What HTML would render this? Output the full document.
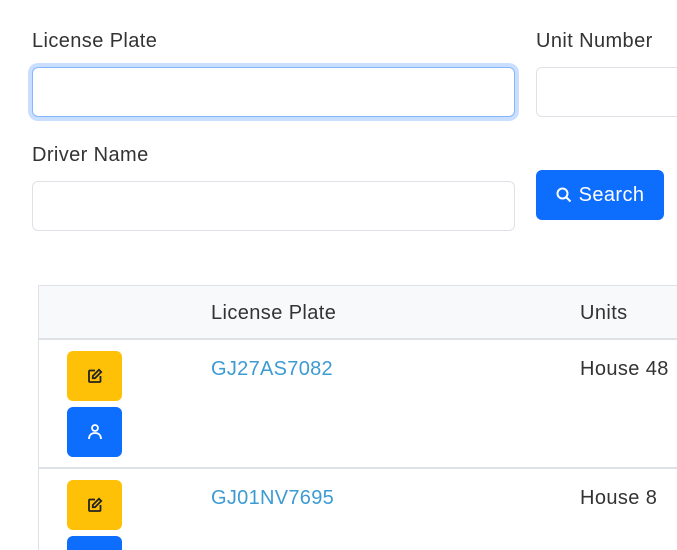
<!DOCTYPE html>
<html><head><style>
*{box-sizing:border-box;margin:0;padding:0}
html,body{width:677px;height:550px;overflow:hidden}
body{background:#fff;font-family:"Liberation Sans",sans-serif;color:#333;position:relative}
.a{position:absolute}
.lbl{font-size:20px;color:#333;letter-spacing:.4px}
.inp{border:1px solid #dee2e6;border-radius:6px;background:#fff}
.btn{position:absolute;left:67px;width:55px;height:50px;border-radius:6px;display:flex;align-items:center;justify-content:center}
.y{background:#ffc107}.b{background:#0d6efd}
.link{color:#3d9bd3;font-size:20px;letter-spacing:.3px}
.cell{font-size:20px;color:#333;letter-spacing:.4px}
</style></head><body>
<div class="a lbl" style="left:32px;top:30px">License Plate</div>
<div class="a lbl" style="left:536px;top:30px">Unit Number</div>
<div class="a inp" style="left:32px;top:67px;width:483px;height:50px;border-color:#86b7fe;box-shadow:0 0 0 4px rgba(13,110,253,.22)"></div>
<div class="a inp" style="left:536px;top:67px;width:141px;height:50px;border-right:none;border-radius:6px 0 0 6px"></div>
<div class="a lbl" style="left:32px;top:144px">Driver Name</div>
<div class="a inp" style="left:32px;top:181px;width:483px;height:50px"></div>
<div class="a" style="left:536px;top:170px;width:128px;height:50px;background:#0d6efd;border-radius:6px;color:#fff;font-size:20px;letter-spacing:.4px;display:flex;align-items:center;justify-content:center;gap:7px">
<svg width="16" height="16" viewBox="0 0 16 16"><circle cx="6.5" cy="6.5" r="5" fill="none" stroke="#fff" stroke-width="2"/><path d="M10 10l4.5 4.5" stroke="#fff" stroke-width="2"/></svg>Search</div>
<div class="a" style="left:38px;top:285px;width:639px;height:265px;border-left:1px solid #dee2e6;border-top:1px solid #dee2e6"></div>
<div class="a" style="left:39px;top:286px;width:638px;height:54px;background:#f8f9fa;border-bottom:2px solid #dee2e6"></div>
<div class="a cell" style="left:211px;top:302px">License Plate</div>
<div class="a cell" style="left:580px;top:302px">Units</div>
<div class="a" style="left:39px;top:467px;width:638px;height:2px;background:#dee2e6"></div>
<div class="btn y" style="top:351px"><svg width="16" height="16" viewBox="0 0 16 16" fill="none" stroke="#222" stroke-width="1.8"><path d="M8 2.5H3a1 1 0 0 0-1 1v9.5a1 1 0 0 0 1 1h9.5a1 1 0 0 0 1-1V8"/><path d="M12 1.8l2.2 2.2L8 10.2H5.8V8z"/></svg></div>
<div class="btn b" style="top:407px"><svg width="16" height="18" viewBox="0 0 16 18" fill="none" stroke="#fff" stroke-width="1.8"><circle cx="8" cy="5" r="3"/><path d="M2 16c0-4 2.5-6 6-6s6 2 6 6"/></svg></div>
<div class="a link" style="left:211px;top:358px">GJ27AS7082</div>
<div class="a cell" style="left:580px;top:358px">House 48</div>
<div class="btn y" style="top:480px"><svg width="16" height="16" viewBox="0 0 16 16" fill="none" stroke="#222" stroke-width="1.8"><path d="M8 2.5H3a1 1 0 0 0-1 1v9.5a1 1 0 0 0 1 1h9.5a1 1 0 0 0 1-1V8"/><path d="M12 1.8l2.2 2.2L8 10.2H5.8V8z"/></svg></div>
<div class="btn b" style="top:536px;height:14px;border-radius:6px 6px 0 0"></div>
<div class="a link" style="left:211px;top:487px">GJ01NV7695</div>
<div class="a cell" style="left:580px;top:487px">House 8</div>
</body></html>
